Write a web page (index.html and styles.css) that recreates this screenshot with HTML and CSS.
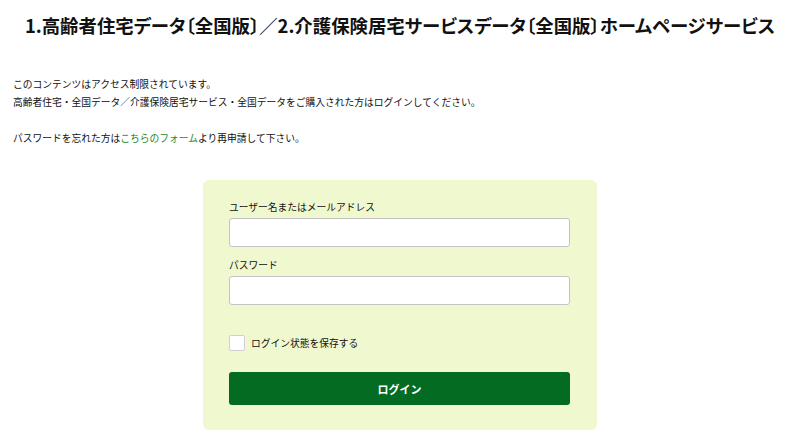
FILE: index.html
```html
<!DOCTYPE html>
<html lang="ja">
<head>
    <meta charset="UTF-8">
    <meta name="viewport" content="width=device-width, initial-scale=1.0">
    <title>ログイン</title>
    <link rel="stylesheet" href="styles.css">
</head>
<body>
    <h1 class="page-title">1.高齢者住宅データ〔全国版〕／2.介護保険居宅サービスデータ〔全国版〕ホームページサービス</h1>

    <div class="notice">
        <p>このコンテンツはアクセス制限されています。<br>
        高齢者住宅・全国データ／介護保険居宅サービス・全国データをご購入された方はログインしてください。</p>
        <p>パスワードを忘れた方は<a href="#">こちらのフォーム</a>より再申請して下さい。</p>
    </div>

    <form class="login-box" onsubmit="return false;">
        <label class="field-label" for="user">ユーザー名またはメールアドレス</label>
        <input class="field-input" type="text" id="user">

        <label class="field-label" for="pass">パスワード</label>
        <input class="field-input" type="password" id="pass">

        <label class="remember">
            <input type="checkbox">
            <span>ログイン状態を保存する</span>
        </label>

        <button type="submit" class="login-btn">ログイン</button>
    </form>
</body>
</html>
```

FILE: styles.css
```css
body {
    margin: 0;
    padding: 0 13px;
    font-family: "Noto Sans CJK JP", "Noto Sans", sans-serif;
    color: #111;
    background: #fff;
}
.page-title {
    margin: 0;
    padding-top: 13px;
    font-size: 18.4px;
    line-height: 24px;
    font-weight: bold;
    text-align: center;
    color: #111;
    font-feature-settings: "palt";
}
.notice {
    margin-top: 38px;
    font-size: 9.75px;
    line-height: 18px;
}
.notice p {
    margin: 0 0 18px;
}
.notice p:last-child {
    margin-bottom: 0;
}
.notice a {
    color: #1e8a2e;
    text-decoration: none;
}
.login-box {
    width: 394px;
    box-sizing: border-box;
    margin: 33px auto 0;
    padding: 18px 27px 25px 26px;
    background: #f0f8cf;
    border-radius: 6px;
    display: flex;
    flex-direction: column;
}
.field-label {
    font-size: 9.75px;
    line-height: 18px;
    margin-bottom: 2px;
}
.field-input {
    height: 29px;
    box-sizing: border-box;
    border: 1px solid #c4c4c4;
    border-radius: 3px;
    background: #fff;
    margin: 0 0 9px;
}
.remember {
    display: flex;
    align-items: center;
    gap: 6px;
    margin-top: 20px;
    font-size: 9.75px;
    line-height: 18px;
}
.remember input {
    appearance: none;
    width: 16px;
    height: 16px;
    margin: 0;
    background: #fff;
    border: 1px solid #cfcfcf;
    border-radius: 2px;
}
.login-btn {
    margin-top: 20px;
    height: 33px;
    border: none;
    border-radius: 3px;
    background: #036c22;
    color: #fff;
    font-family: inherit;
    font-size: 11px;
    font-weight: bold;
    cursor: pointer;
}
```
